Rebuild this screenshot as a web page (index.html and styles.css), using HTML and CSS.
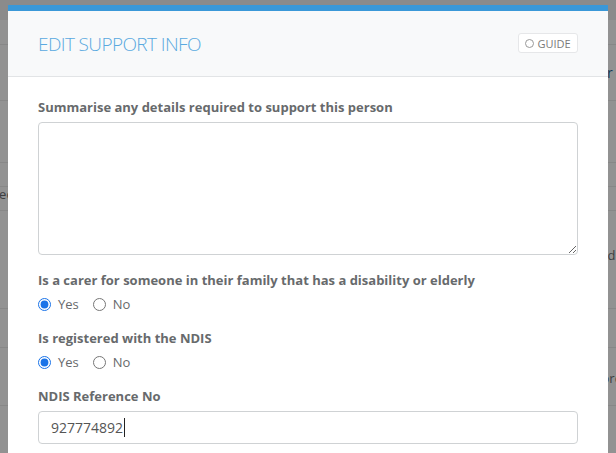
FILE: index.html
```html
<!DOCTYPE html>
<html lang="en">
<head>
<meta charset="utf-8">
<title>Edit Support Info</title>
<link rel="stylesheet" href="styles.css">
</head>
<body>
  <div class="page">
    <div class="page-top"></div>
    <div class="page-row r1"></div>
    <div class="page-row r2"><span class="frag f-r">Order</span></div>
    <div class="page-row r3"><span class="frag f-re">Prefere</span></div>
    <div class="page-row r4"></div>
    <div class="page-row r5"><span class="frag f-ec">Spec</span></div>
    <div class="page-row r6"><span class="frag f-d">Updated</span></div>
    <div class="page-row r7"></div>
    <div class="page-row r8"><span class="frag f-rc">Record</span></div>
    <div class="page-row r9"></div>
  </div>
  <div class="backdrop"></div>

  <div class="modal">
    <div class="modal-header">
      <h4 class="modal-title">EDIT SUPPORT INFO</h4>
      <button class="guide-btn" type="button"><span class="guide-icon"></span>GUIDE</button>
    </div>
    <div class="modal-body">
      <div class="form-group">
        <label class="control-label">Summarise any details required to support this person</label>
        <textarea class="form-control textarea"></textarea>
      </div>
      <div class="form-group">
        <label class="control-label tight">Is a carer for someone in their family that has a disability or elderly</label>
        <div class="radio-row">
          <label class="radio"><input type="radio" name="carer" checked><span>Yes</span></label>
          <label class="radio"><input type="radio" name="carer"><span>No</span></label>
        </div>
      </div>
      <div class="form-group">
        <label class="control-label tight">Is registered with the NDIS</label>
        <div class="radio-row">
          <label class="radio"><input type="radio" name="ndis" checked><span>Yes</span></label>
          <label class="radio"><input type="radio" name="ndis"><span>No</span></label>
        </div>
      </div>
      <div class="form-group">
        <label class="control-label">NDIS Reference No</label>
        <div class="form-control input"><span class="value">927774892</span><span class="caret"></span></div>
      </div>
    </div>
  </div>
</body>
</html>
```

FILE: styles.css
```css
* { box-sizing: border-box; }

html, body {
  margin: 0;
  padding: 0;
  width: 616px;
  height: 453px;
  overflow: hidden;
}

body {
  position: relative;
  background: #f3f3f4;
  font-family: "Open Sans", "Noto Sans", "Liberation Sans", sans-serif;
  color: #676a6c;
}

/* underlying page (dimmed) */
.page {
  display: flex;
  flex-direction: column;
}
.page-top { height: 20px; background: #e8e8e8; }
.page-row {
  border-bottom: 1px solid #e2e2e2;
  position: relative;
  font-size: 13px;
  color: #676a6c;
}
.r1 { height: 25px; }
.r2 { height: 56px; }
.r3 { height: 62px; }
.r4 { height: 24px; }
.r5 { height: 24px; }
.r6 { height: 98px; }
.r7 { height: 39px; }
.r8 { height: 58px; }
.r9 { height: 47px; border-bottom: 0; }

.frag { position: absolute; white-space: nowrap; }
.f-r  { left: 574px; top: 18px; color: #1f5f8f; font-size: 14px; }
.f-re { left: 560px; top: 25px; }
.f-ec { left: -16px; top: -2px; }
.f-d  { left: 563px; top: 35px; }
.f-rc { left: 580px; top: 21px; }

.backdrop {
  position: absolute;
  inset: 0;
  background: rgba(0, 0, 0, 0.4);
}

/* modal */
.modal {
  position: absolute;
  left: 8px;
  top: 5px;
  width: 600px;
  height: 460px;
  background: #fff;
  border-top: 6px solid #3a98d8;
}

.modal-header {
  height: 66px;
  background: #f8f9fa;
  border-bottom: 1px solid #e2e4e6;
  display: flex;
  align-items: center;
  justify-content: space-between;
  padding: 0 30px;
}

.modal-title {
  margin: 0;
  font-weight: 300;
  font-size: 19px;
  letter-spacing: -0.6px;
  color: #5aa9e0;
  line-height: 24px;
  padding-top: 1px;
}

.guide-btn {
  width: 60px;
  height: 20px;
  background: #fff;
  border: 1px solid #e6e7e9;
  border-radius: 3px;
  display: flex;
  align-items: center;
  justify-content: center;
  gap: 3px;
  padding: 0;
  font-family: inherit;
  font-size: 11px;
  color: #7a7a7a;
  margin-top: -1px;
}
.guide-icon {
  width: 9px;
  height: 9px;
  border: 1.5px solid #999;
  border-radius: 50%;
}

.modal-body {
  padding: 21px 30px 0;
}

.form-group { margin-bottom: 16px; }
.form-group + .form-group { margin-bottom: 15px; }

.control-label {
  display: block;
  font-size: 13px;
  font-weight: 700;
  line-height: 18px;
  margin-bottom: 6px;
  color: #676a6c;
}
.control-label.tight { margin-bottom: 5px; }

.form-control {
  display: block;
  width: 540px;
  border: 1px solid #cfd2d4;
  border-radius: 4px;
  background: #fff;
}

.textarea {
  height: 133px;
  resize: vertical;
  margin: 0;
  font-family: inherit;
}

.radio-row {
  display: flex;
  align-items: center;
  height: 20px;
  gap: 14px;
}
.radio {
  display: flex;
  align-items: center;
  gap: 7px;
  font-size: 13px;
  color: #676a6c;
}
.radio input {
  margin: 0;
  width: 13px;
  height: 13px;
  accent-color: #1a73e8;
}

.input {
  height: 33px;
  padding: 0 12px;
  display: flex;
  align-items: center;
  font-size: 14px;
  color: #555;
}
.caret {
  width: 1px;
  height: 19px;
  background: #222;
  margin-left: 1px;
}
```
